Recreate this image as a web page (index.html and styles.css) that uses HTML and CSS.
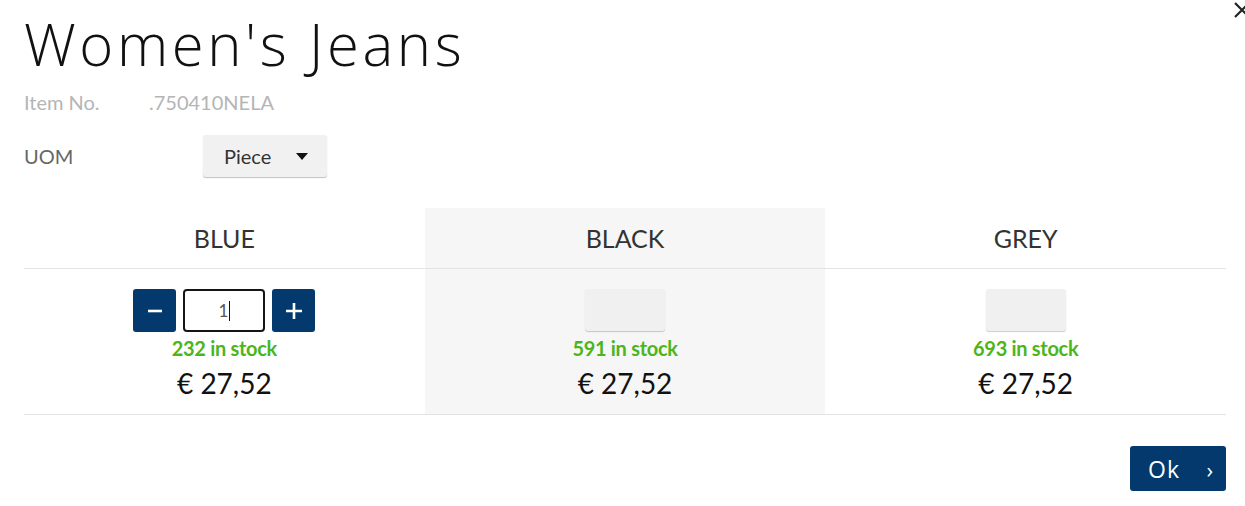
FILE: index.html
```html
<!DOCTYPE html>
<html>
<head>
    <meta name="viewport" content="width=device-width, initial-scale=1.0">
    <link rel="stylesheet" href="styles.css">
</head>
<body>
    <div class="modal">
        <button class="close-btn" aria-label="Close">
            <svg width="18" height="18" viewBox="0 0 18 18"><path d="M2 2 L16 16 M16 2 L2 16" stroke="#222" stroke-width="2.2" fill="none"/></svg>
        </button>
        <h1 class="title">Women's Jeans</h1>
        <div class="info-row item-no">
            <span class="info-label">Item No.</span>
            <span class="info-value">.750410NELA</span>
        </div>
        <div class="info-row uom">
            <span class="info-label">UOM</span>
            <button class="select-btn">Piece <span class="caret"></span></button>
        </div>

        <div class="variants">
            <div class="variant">
                <div class="variant-head">BLUE</div>
                <div class="variant-body">
                    <div class="stepper">
                        <button class="step-btn">
                            <svg width="18" height="18" viewBox="0 0 18 18"><path d="M2 9 H16" stroke="#fff" stroke-width="2.6"/></svg>
                        </button>
                        <div class="qty-input">1<span class="cursor"></span></div>
                        <button class="step-btn">
                            <svg width="20" height="20" viewBox="0 0 20 20"><path d="M2 10 H18 M10 2 V18" stroke="#fff" stroke-width="2.6"/></svg>
                        </button>
                    </div>
                    <div class="stock">232 in stock</div>
                    <div class="price">€ 27,52</div>
                </div>
            </div>
            <div class="variant shaded">
                <div class="variant-head">BLACK</div>
                <div class="variant-body">
                    <div class="stepper"><div class="qty-empty"></div></div>
                    <div class="stock">591 in stock</div>
                    <div class="price">€ 27,52</div>
                </div>
            </div>
            <div class="variant">
                <div class="variant-head">GREY</div>
                <div class="variant-body">
                    <div class="stepper"><div class="qty-empty"></div></div>
                    <div class="stock">693 in stock</div>
                    <div class="price">€ 27,52</div>
                </div>
            </div>
        </div>

        <div class="footer">
            <button class="ok-btn">Ok <span class="chev">›</span></button>
        </div>
    </div>
</body>
</html>
```

FILE: styles.css
```css
body {
    margin: 0;
    padding: 0;
    background-color: #fff;
    font-family: Lato, "Open Sans", sans-serif;
    color: #333;
    overflow: hidden;
}

.modal {
    position: relative;
    width: 1202px;
    padding: 0 19px 0 24px;
}

.close-btn {
    position: absolute;
    top: 1px;
    right: -6px;
    border: none;
    background: none;
    padding: 0;
    width: 18px;
    height: 18px;
    cursor: pointer;
}

.title {
    margin: 0;
    padding-top: 11px;
    height: 69px;
    font-family: "Open Sans", sans-serif;
    font-weight: 300;
    font-size: 58px;
    line-height: 66px;
    letter-spacing: 3.6px;
    color: #111;
}

.info-row {
    display: flex;
    align-items: center;
    font-size: 20px;
}

.item-no {
    margin-top: 9px;
    height: 26px;
    color: #b5b5b5;
}

.item-no .info-label {
    width: 125px;
}

.uom {
    margin-top: 20px;
    color: #666;
}

.uom .info-label {
    width: 179px;
}

.select-btn {
    display: flex;
    align-items: center;
    width: 124px;
    height: 42px;
    padding: 0 0 0 21px;
    border: none;
    border-radius: 3px;
    background-color: #f1f1f1;
    box-shadow: 0 1px 1px rgba(0, 0, 0, 0.25);
    font-family: Lato, sans-serif;
    font-size: 20px;
    color: #333;
    cursor: pointer;
}

.caret {
    margin-left: 25px;
    width: 0;
    height: 0;
    border-left: 6px solid transparent;
    border-right: 6px solid transparent;
    border-top: 7px solid #111;
}

.variants {
    display: flex;
    margin-top: 31px;
    width: 1202px;
}

.variant {
    flex: 1;
    border-bottom: 1px solid #e3e3e3;
}

.variant.shaded {
    background-color: #f6f6f6;
}

.variant-head {
    height: 60px;
    line-height: 60px;
    text-align: center;
    font-size: 25px;
    color: #333;
    border-bottom: 1px solid #e3e3e3;
}

.variant-body {
    display: flex;
    flex-direction: column;
    align-items: center;
    padding-top: 20px;
    height: 125px;
}

.stepper {
    display: flex;
    gap: 7px;
    height: 43px;
}

.step-btn {
    display: flex;
    align-items: center;
    justify-content: center;
    width: 43px;
    height: 43px;
    padding: 0;
    border: none;
    border-radius: 3px;
    background-color: #03396c;
    cursor: pointer;
}

.qty-input {
    box-sizing: border-box;
    width: 82px;
    height: 43px;
    border: 2px solid #151515;
    border-radius: 4px;
    background: #fff;
    text-align: center;
    line-height: 39px;
    font-size: 17px;
    color: #555;
}

.cursor {
    display: inline-block;
    width: 1px;
    height: 20px;
    margin-left: 1px;
    background: #111;
    vertical-align: -4px;
}

.qty-empty {
    width: 80px;
    height: 42px;
    border-radius: 3px;
    background-color: #f0f0f0;
    box-shadow: 0 1px 1px rgba(0, 0, 0, 0.2);
}

.stock {
    margin-top: 4px;
    font-size: 20px;
    font-weight: 700;
    letter-spacing: -0.3px;
    color: #4cb51b;
}

.price {
    margin-top: 6px;
    font-size: 28px;
    color: #111;
}

.footer {
    display: flex;
    justify-content: flex-end;
    margin-top: 31px;
    width: 1202px;
}

.ok-btn {
    display: flex;
    align-items: center;
    justify-content: space-between;
    width: 96px;
    height: 45px;
    padding: 0 12px 0 18px;
    border: none;
    border-radius: 3px;
    background-color: #03396c;
    color: #fff;
    font-family: "Open Sans", sans-serif;
    font-size: 23px;
    letter-spacing: 1px;
    cursor: pointer;
}

.chev {
    font-size: 22px;
}
```
